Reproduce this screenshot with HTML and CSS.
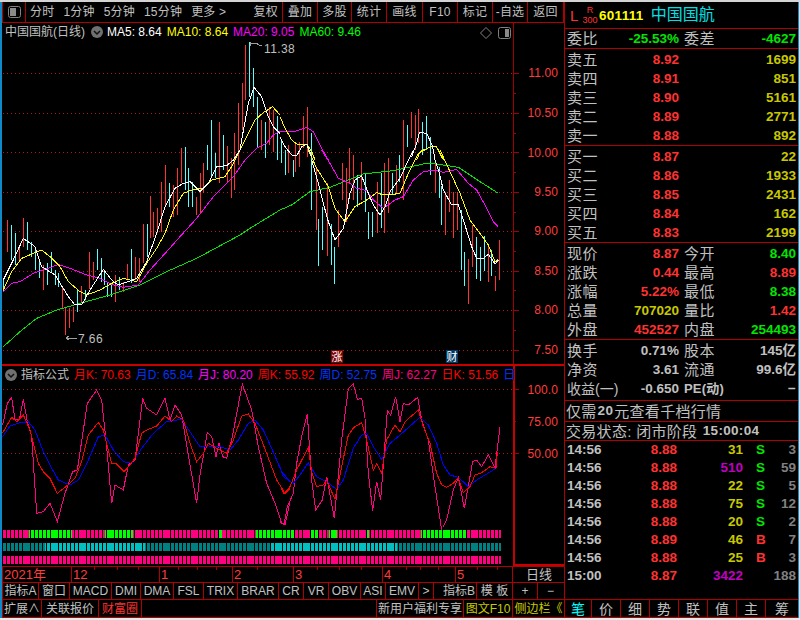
FILE: index.html
```html
<!DOCTYPE html>
<html lang="zh">
<head>
<meta charset="utf-8">
<title>中国国航</title>
<link rel="stylesheet" href="styles.css">
</head>
<body>
<div class="strip-top"></div>
<div class="app">
  <div class="edge-left"></div>
  <div class="left">
    <div class="toolbar">
      <div class="tb-icon">
        <svg class="icon" width="13" height="12" viewBox="0 0 13 12"><rect class="ic-box" x=".5" y=".5" width="12" height="11" rx="2"/><rect class="ic-fill" x="2" y="2" width="6" height="8"/></svg>
      </div>
      <div class="tb-periods"><span>分时</span><span>1分钟</span><span>5分钟</span><span>15分钟</span><span>更多 &gt;</span><span class="tb-push">复权</span></div>
      <div class="tb-btn">叠加</div><div class="tb-btn">多股</div><div class="tb-btn">统计</div><div class="tb-btn">画线</div><div class="tb-btn">F10</div><div class="tb-btn">标记</div><div class="tb-btn">-自选</div><div class="tb-btn">返回</div>
    </div>

    <div class="pane pane-main">
      <svg class="chart" width="562" height="341" viewBox="2 23 562 341">
        <path class="grid" d="M3 73H513M3 113H513M3 152.5H513M3 192H513M3 231H513M3 271H513M3 310H513M3 350H513"/>
        <path class="axis" d="M513.5 23V364M513 73h6M513 113h6M513 152.5h6M513 192h6M513 231h6M513 271h6M513 310h6M513 350h6M513 93h3M513 133h3M513 172h3M513 212h3M513 251h3M513 290h3M513 330h3"/>
        <g class="axis-labels">
          <text x="558" y="77">11.00</text><text x="558" y="117">10.50</text><text x="558" y="157">10.00</text><text x="558" y="196">9.50</text><text x="558" y="235">9.00</text><text x="558" y="275">8.50</text><text x="558" y="314">8.00</text><text x="558" y="354">7.50</text>
        </g>
        <path class="candle-red" d="M7.5 220V252M19.5 245V260M23.5 218V247M43.5 265V290M62.5 287V308M65.5 307V335M69.5 308V328M73.5 307V322M81.5 286V302M89.5 252V289M93.5 262V280M115.5 275V302M123.5 282V292M127.5 264V280M135.5 257V280M139.5 258V282M143.5 224V263M150.5 196V238M153.5 212V237M157.5 208V233M161.5 182V232M165.5 165V207M173.5 185V217M177.5 168V215M181.5 148V183M196.5 197V215M200.5 173V213M203.5 163V193M219.5 122V183M227.5 146V182M231.5 158V198M234.5 133V190M238.5 103V165M242.5 83V130M245.5 45V100M261.5 120V150M269.5 107V145M273.5 110V152M288.5 145V173M295.5 142V172M299.5 142V167M303.5 116V148M307.5 107V157M316.5 167V230M327.5 183V256M338.5 210V247M342.5 163V200M346.5 168V222M349.5 148V183M353.5 155V200M361.5 162V200M377.5 182V233M384.5 163V233M388.5 158V213M396.5 165V193M403.5 120V200M411.5 112V138M415.5 115V150M418.5 109V143M435.5 160V193M445.5 192V235M449.5 180V212M453.5 192V238M457.5 192V230M468.5 259V304M472.5 225V267M488.5 245V282M495.5 276V291M499.5 240V280"/>
        <path class="candle-cyan" d="M3.5 280V292M11.5 225V260M15.5 233V265M27.5 222V250M31.5 242V257M35.5 247V270M39.5 260V278M47.5 263V285M51.5 252V273M55.5 270V285M58.5 273V287M77.5 290V312M85.5 290V300M97.5 249V270M101.5 258V282M104.5 270V285M107.5 282V297M111.5 285V297M119.5 277V290M131.5 249V283M147.5 224V257M169.5 183V207M185.5 147V190M188.5 168V207M192.5 182V207M207.5 145V170M211.5 120V178M215.5 153V178M223.5 135V170M249.5 42V97M253.5 68V107M257.5 97V147M265.5 122V158M277.5 116V160M281.5 140V163M285.5 150V175M293.5 160V177M311.5 133V210M318.5 219V266M322.5 207V250M331.5 224V265M334.5 247V284M357.5 175V207M365.5 173V212M368.5 212V239M372.5 212V237M381.5 173V228M392.5 173V195M399.5 155V182M407.5 125V147M422.5 122V155M426.5 116V150M430.5 137V175M439.5 167V198M441.5 186V225M461.5 210V270M464.5 252V286M476.5 237V279M480.5 247V281M484.5 236V271M491.5 250V276"/>

        <polyline class="line l-green" transform="translate(0 150) scale(.33333)" points="10,590 60,545 110,505 170,480 240,460 330,435 420,405 500,365 590,325 720,255 750,235 840,180"/>
        <polyline class="line l-green" transform="translate(280 150) scale(.33333)" points="0,180 35,165 90,125 150,112 250,72 340,62 430,42 470,42 535,52 600,95 655,130"/>

        <polyline class="line l-mag" transform="translate(0 150) scale(.33333)" points="10,425 35,400 60,395 100,370 145,355 175,343 210,355 260,375 300,385 335,403 370,412 415,405 450,360 500,305 540,260 590,205 640,140 700,80 735,30 765,0"/>
        <polyline class="line l-mag" transform="scale(.33333)" points="765,450 770,445 800,430 820,405 840,395"/>
        <polyline class="line l-mag" transform="translate(280 0) scale(.33333)" points="0,395 50,393 80,382 100,395 125,445 145,480"/>
        <polyline class="line l-mag" transform="translate(280 150) scale(.33333)" points="125,0 150,40 175,85 210,100 230,115 260,122 280,150 310,175 345,150 370,140 400,90 430,65 465,60 490,67 530,58 565,100 590,120 615,165 640,215 655,230"/>

        <polyline class="line l-yel" transform="translate(0 150) scale(.33333)" points="10,420 35,365 65,325 100,310 125,300 150,320 180,350 205,395 240,425 260,435 300,420 335,400 370,385 410,395 440,340 470,295 495,250 520,180 550,130 580,118 610,115 635,90 675,80 695,50 720,0"/>
        <polyline class="line l-yel" transform="scale(.33333)" points="720,450 735,420 765,360 790,338 818,320 840,345"/>
        <polyline class="line l-yel" transform="translate(280 0) scale(.33333)" points="0,350 15,385 35,420 55,435 80,432 95,455 105,480"/>
        <polyline class="line l-yel" transform="translate(280 150) scale(.33333)" points="85,0 110,55 145,110 165,175 195,215 225,170 260,150 290,128 310,135 340,133 360,130 385,70 415,10 435,0"/>
        <polyline class="line l-yel" transform="translate(280 0) scale(.33333)" points="410,480 420,455 450,441 470,441 490,480"/>
        <polyline class="line l-yel" transform="translate(280 150) scale(.33333)" points="480,0 510,65 540,130 570,210 600,250 625,285 645,335 655,328"/>

        <polyline class="line l-white" transform="translate(0 150) scale(.33333)" points="10,390 35,340 70,265 105,290 125,350 165,375 205,440 225,465 245,465 270,420 310,358 335,390 355,405 385,395 410,385 440,335 470,250 495,170 525,115 550,100 570,95 600,125 625,100 650,50 680,47 700,30 720,0"/>
        <polyline class="line l-white" transform="scale(.33333)" points="720,450 725,420 745,310 762,262 785,290 805,350 820,380 840,400"/>
        <polyline class="line l-white" transform="translate(280 0) scale(.33333)" points="0,410 15,440 35,465 50,468 65,440 80,432 95,470"/>
        <polyline class="line l-white" transform="translate(280 150) scale(.33333)" points="95,30 115,100 130,160 145,215 165,270 190,235 210,130 225,90 245,78 265,130 280,165 300,195 315,170 330,125 360,85 385,30 400,0"/>
        <polyline class="line l-white" transform="translate(280 0) scale(.33333)" points="395,470 410,430 418,397 440,400 458,440 465,480"/>
        <polyline class="line l-white" transform="translate(280 150) scale(.33333)" points="465,30 478,70 490,120 515,165 535,165 550,210 575,290 590,325 610,325 625,313 645,342 655,330"/>

        <path class="marker" d="M250 42v4M250 43h6l3 2h3M66 338h11M66 338l3-2M66 338l3 2"/>
        <text class="note" x="264" y="53">11.38</text>
        <text class="note" x="78" y="343">7.66</text>

        <rect class="badge-red" x="331" y="350" width="12" height="13"/>
        <text class="badge-text" x="337" y="361">涨</text>
        <rect class="badge-blue" x="446" y="350" width="12" height="13"/>
        <text class="badge-text" x="452" y="361">财</text>
      </svg>
      <div class="legend">
        <span class="title">中国国航(日线)</span>
        <span class="round"><svg width="12" height="12" viewBox="0 0 12 12"><circle class="round-bg" cx="6" cy="6" r="6"/><path class="round-chev" d="M3 5l3 3 3-3"/></svg></span>
        <span class="c-white">MA5: 8.64</span><span class="c-yel">MA10: 8.64</span><span class="c-mag">MA20: 9.05</span><span class="c-green">MA60: 9.46</span>
      </div>
      <div class="corner-icons">
        <svg width="12" height="12" viewBox="0 0 12 12"><path class="ic-box" d="M6 .5L11.5 6 6 11.5.5 6z"/></svg>
        <svg width="13" height="12" viewBox="0 0 13 12"><rect class="ic-box" x=".5" y=".5" width="12" height="11" rx="2"/><rect class="ic-fill" x="7" y="2" width="4" height="8"/></svg>
      </div>
    </div>

    <div class="pane pane-sub">
      <svg class="chart" width="562" height="202" viewBox="2 364 562 202">
        <defs>
          <pattern id="comb" x="2" y="0" width="28" height="8" patternUnits="userSpaceOnUse"><path class="comb-gap" d="M0 0h1v8H0zM4 0h1v8H4zM8 0h1v8H8zM12 0h1v8h-1zM16 0h1v8h-1zM20 0h1v8h-1z"/></pattern>
        </defs>
        <path class="grid" d="M3 389H513M3 453H513"/>
        <path class="axis" d="M513 421h3M513 389h6M513 453h6"/>
        <g class="axis-labels">
          <text x="558" y="394">100.0</text><text x="558" y="426">75.00</text><text x="558" y="458">50.00</text>
        </g>
        <path class="frame" d="M2 365H564M514 364V566M514 565H564"/>

        <polyline class="line l-j" transform="translate(0 340) scale(.33333)" points="8,255 22,190 35,172 45,240 58,240 70,178 82,245 95,290 110,520 130,515 150,490 172,545 195,460 218,395 232,390 262,190 290,150 305,180 320,320 335,490 345,435 370,450 385,375 405,360 428,175 440,205 470,225 495,175 510,240 525,195 545,225 565,345 590,490 600,405 622,278 635,290 648,350 657,310 668,350 680,355 697,290 727,132 755,210 775,320 800,430 825,490 845,550 855,555 870,485"/>
        <polyline class="line l-j" transform="translate(280 340) scale(.33333)" points="0,545 12,553 22,500 40,460 50,370 65,290 82,222 95,420 107,510 127,480 140,410 163,535 185,300 205,145 220,132 232,178 245,175 255,235 265,400 278,512 290,425 302,480 322,212 332,225 347,170 360,245 370,190 385,195 413,172 425,240 445,300 465,440 485,570 500,540 520,450 535,412 553,505 578,365 590,360 605,380 625,345 645,385 650,340 660,262"/>
        <polyline class="line l-d" transform="translate(0 340) scale(.33333)" points="8,290 30,258 60,248 85,245 105,270 130,335 150,375 175,420 210,435 235,420 265,360 295,290 315,285 340,330 370,365 395,370 425,325 460,280 500,245 545,238 570,275 600,320 625,318 660,320 690,330 715,300 745,250 765,240 790,270 815,325 845,395 870,425"/>
        <polyline class="line l-d" transform="translate(280 340) scale(.33333)" points="0,382 10,410 40,430 60,405 85,368 110,410 140,425 170,448 190,420 220,325 245,285 260,280 280,320 305,358 330,310 360,285 420,232 445,255 470,310 490,375 510,405 535,412 565,440 590,420 640,390 655,378"/>
        <polyline class="line l-k" transform="translate(0 340) scale(.33333)" points="8,278 35,232 50,245 70,225 90,270 115,370 130,395 150,415 172,460 200,438 225,415 245,365 265,285 295,247 310,270 335,370 350,372 372,395 390,375 405,355 425,280 440,270 470,258 495,228 515,245 530,228 550,240 570,310 590,365 610,340 625,310 650,325 680,340 700,300 725,228 745,222 765,250 800,340 830,420 855,460 870,445"/>
        <polyline class="line l-k" transform="translate(280 340) scale(.33333)" points="0,435 12,462 30,440 50,390 85,322 95,395 110,440 130,435 140,420 165,478 185,380 205,285 222,262 245,248 260,300 280,390 290,370 305,400 320,300 345,255 360,275 375,245 415,210 430,260 450,310 470,400 485,435 500,442 520,430 535,413 550,458 570,440 585,405 605,398 630,380 648,385 652,335"/>

        <!-- signal rows: coloured runs, then a comb that cuts them into bars -->
        <path class="sig-pink" d="M3 534H29M72 534H105M133 534H218M222 534H256M294 534H310M319 534H329M337 534H367M369 534H421M467 534H501M3 559.5H501"/>
        <path class="sig-green" d="M29 534H72M105 534H133M218 534H222M256 534H294M310 534H319M329 534H337M367 534H369M421 534H467"/>
        <path class="sig-teal" d="M3 547H45M145 547H270M397 547H501"/>
        <path class="sig-cyan" d="M45 547H145M270 547H397"/>
        <rect class="comb" x="3" y="526" width="499" height="40"/>
      </svg>
      <div class="legend legend-sub">
        <span class="round"><svg width="12" height="12" viewBox="0 0 12 12"><circle class="round-bg" cx="6" cy="6" r="6"/><path class="round-chev" d="M3 5l3 3 3-3"/></svg></span>
        <span class="title sub-title">指标公式</span>
        <span class="c-red">月K: 70.63</span><span class="c-blue">月D: 65.84</span><span class="c-mag">月J: 80.20</span><span class="c-red">周K: 55.92</span><span class="c-blue">周D: 52.75</span><span class="c-pink">周J: 62.27</span><span class="c-red">日K: 51.56</span><span class="c-blue">日</span>
      </div>
    </div>

    <div class="time-row">
      <div>2021年</div><div>12</div><div>1</div><div>2</div><div>3</div><div>4</div><div>5</div><div class="time-mode">日线</div>
      <svg class="time-ticks" width="512" height="4" viewBox="0 0 512 4"><path class="axis" d="M92 0v3M115 0v3M136 0v3M176 0v3M195 0v3M214 0v3M255 0v3M315 0v3M337 0v3M359 0v3M404 0v3M418 0v3M436 0v3M475 0v3M495 0v3"/></svg>
    </div>

    <div class="tab-row">
      <div>指标A</div><div>窗口</div><div>MACD</div><div>DMI</div><div>DMA</div><div>FSL</div><div>TRIX</div><div>BRAR</div><div>CR</div><div>VR</div><div>OBV</div><div>ASI</div><div>EMV</div><div>&gt;</div><div class="tab-b">指标B</div><div>模 板</div><div>+</div><div>−</div>
    </div>

    <div class="bottom-row">
      <div>扩展∧</div><div>关联报价</div><div class="c-hot">财富圈</div><div class="bottom-gap"></div><div>新用户福利专享</div><div class="c-dimyel">图文F10</div><div class="c-dimyel">侧边栏《</div>
    </div>
  </div>

  <div class="right">
    <div class="r-head">
      <span class="r-l">L</span>
      <span class="r-stack"><span>R</span><span>300</span></span>
      <span class="r-code">601111</span>
      <span class="r-name">中国国航</span>
    </div>
    <div class="r-sec r-one">
      <div class="qrow"><span class="lab">委比</span><span class="num c-g">-25.53%</span><span class="lab lab2">委差</span><span class="num col5 c-g">-4627</span></div>
    </div>
    <div class="r-sec r-five">
      <div class="qrow"><span class="lab">卖五</span><span class="num c-r">8.92</span><span class="num col5 c-y">1699</span></div>
      <div class="qrow"><span class="lab">卖四</span><span class="num c-r">8.91</span><span class="num col5 c-y">851</span></div>
      <div class="qrow"><span class="lab">卖三</span><span class="num c-r">8.90</span><span class="num col5 c-y">5161</span></div>
      <div class="qrow"><span class="lab">卖二</span><span class="num c-r">8.89</span><span class="num col5 c-y">2771</span></div>
      <div class="qrow"><span class="lab">卖一</span><span class="num c-r">8.88</span><span class="num col5 c-y">892</span></div>
    </div>
    <div class="r-sec r-five">
      <div class="qrow"><span class="lab">买一</span><span class="num c-r">8.87</span><span class="num col5 c-y">22</span></div>
      <div class="qrow"><span class="lab">买二</span><span class="num c-r">8.86</span><span class="num col5 c-y">1933</span></div>
      <div class="qrow"><span class="lab">买三</span><span class="num c-r">8.85</span><span class="num col5 c-y">2431</span></div>
      <div class="qrow"><span class="lab">买四</span><span class="num c-r">8.84</span><span class="num col5 c-y">162</span></div>
      <div class="qrow"><span class="lab">买五</span><span class="num c-r">8.83</span><span class="num col5 c-y">2199</span></div>
    </div>
    <div class="r-sec r-five">
      <div class="qrow"><span class="lab">现价</span><span class="num c-r">8.87</span><span class="lab lab2">今开</span><span class="num col5 c-g">8.40</span></div>
      <div class="qrow"><span class="lab">涨跌</span><span class="num c-r">0.44</span><span class="lab lab2">最高</span><span class="num col5 c-r">8.89</span></div>
      <div class="qrow"><span class="lab">涨幅</span><span class="num c-r">5.22%</span><span class="lab lab2">最低</span><span class="num col5 c-g">8.38</span></div>
      <div class="qrow"><span class="lab">总量</span><span class="num c-y">707020</span><span class="lab lab2">量比</span><span class="num col5 c-r">1.42</span></div>
      <div class="qrow"><span class="lab">外盘</span><span class="num c-r">452527</span><span class="lab lab2">内盘</span><span class="num col5 c-g">254493</span></div>
    </div>
    <div class="r-sec r-three">
      <div class="qrow"><span class="lab">换手</span><span class="num c-w">0.71%</span><span class="lab lab2">股本</span><span class="num col5 c-w">145亿</span></div>
      <div class="qrow"><span class="lab">净资</span><span class="num c-w">3.61</span><span class="lab lab2">流通</span><span class="num col5 c-w">99.6亿</span></div>
      <div class="qrow"><span class="lab lab-wide">收益(一)</span><span class="num c-w">-0.650</span><span class="lab lab2 lab-pe">PE(动)</span><span class="num col5 c-w">−</span></div>
    </div>
    <div class="r-sec r-line r-line-a">仅需<b>20</b>元查看千档行情</div>
    <div class="r-sec r-line r-line-b">交易状态: 闭市阶段 <b>15:00:04</b></div>
    <div class="r-trades">
      <div class="trow"><span class="t-time">14:56</span><span class="c-r">8.88</span><span class="c-y">31</span><span class="t-bs c-g">S</span><span class="t-n">3</span></div>
      <div class="trow"><span class="t-time">14:56</span><span class="c-r">8.88</span><span class="c-p">510</span><span class="t-bs c-g">S</span><span class="t-n">59</span></div>
      <div class="trow"><span class="t-time">14:56</span><span class="c-r">8.88</span><span class="c-y">22</span><span class="t-bs c-g">S</span><span class="t-n">5</span></div>
      <div class="trow"><span class="t-time">14:56</span><span class="c-r">8.88</span><span class="c-y">75</span><span class="t-bs c-g">S</span><span class="t-n">12</span></div>
      <div class="trow"><span class="t-time">14:56</span><span class="c-r">8.88</span><span class="c-y">20</span><span class="t-bs c-g">S</span><span class="t-n">2</span></div>
      <div class="trow"><span class="t-time">14:56</span><span class="c-r">8.89</span><span class="c-y">46</span><span class="t-bs c-r">B</span><span class="t-n">7</span></div>
      <div class="trow"><span class="t-time">14:56</span><span class="c-r">8.88</span><span class="c-y">25</span><span class="t-bs c-r">B</span><span class="t-n">3</span></div>
      <div class="trow"><span class="t-time">15:00</span><span class="c-r">8.87</span><span class="c-p">3422</span><span class="t-bs"></span><span class="t-n">188</span></div>
    </div>
    <div class="r-tabs">
      <div class="r-tab-on">笔</div><div>价</div><div>细</div><div>势</div><div>联</div><div>值</div><div>主</div><div>筹</div>
    </div>
  </div>
  <div class="edge-right"></div>
</div>
<div class="strip-bottom"></div>
</body>
</html>
```

FILE: styles.css
```css
* { box-sizing: border-box; }
html, body { margin: 0; padding: 0; }
body {
  width: 800px;
  height: 620px;
  overflow: hidden;
  background: #000;
  color: #c0c0c0;
  font: 12px/1 "Liberation Sans", "Noto Sans CJK SC", sans-serif;
}
svg { display: block; }
.strip-top { height: 2px; background: #d4d4d4; }
.strip-bottom { height: 2px; background: #e8e8e8; }
.app { display: flex; height: 616px; }
.edge-left { width: 2px; background: #1089c9; }
.edge-right { width: 2px; background: linear-gradient(90deg, #1089c9 50%, #dcdcdc 50%); }
.left { width: 563px; display: flex; flex-direction: column; border-right: 1px solid #b00000; }
.right { width: 233px; display: flex; flex-direction: column; }

/* top toolbar */
.toolbar {
  height: 21px;
  display: grid;
  grid-template-columns: 24px 257px 35px 34px 35px 36px 35px 35px 35px 36px;
  border-bottom: 1px solid #b00000;
  letter-spacing: .2px;
}
.toolbar > div { display: flex; align-items: center; border-right: 1px solid #b00000; }
.tb-icon { border-left: 1px solid #b00000; justify-content: center; }
.tb-periods { gap: 9px; padding: 0 4px 0 4px; }
.tb-push { margin-left: auto; }
.tb-btn { justify-content: center; }
.ic-box { fill: none; stroke: #808080; }
.ic-fill { fill: #8a8a8a; }

/* chart panes */
.pane { position: relative; }
.pane-main { height: 341px; }
.pane-sub { height: 202px; }
.grid { fill: none; stroke: #a02020; stroke-dasharray: 1 3; shape-rendering: crispEdges; }
.axis { fill: none; stroke: #a00000; shape-rendering: crispEdges; }
.frame { fill: none; stroke: #c80000; stroke-width: 2; shape-rendering: crispEdges; }
.axis-labels text { fill: #ff3c3c; font-size: 12px; text-anchor: end; letter-spacing: .1px; }
.candle-red, .candle-cyan { fill: none; shape-rendering: crispEdges; }
.candle-red { stroke: #ff3232; }
.candle-cyan { stroke: #54ffff; }
.line { fill: none; stroke-width: 1; vector-effect: non-scaling-stroke; shape-rendering: crispEdges; }
.l-green { stroke: #00e600; }
.l-mag { stroke: #ff00ff; }
.l-yel { stroke: #ffff00; }
.l-white { stroke: #ffffff; }
.l-j { stroke: #ff0080; }
.l-k { stroke: #ff0000; }
.l-d { stroke: #0000ff; }
.marker { fill: none; stroke: #a0a0a0; shape-rendering: crispEdges; }
.note { fill: #c0c0c0; font-size: 12px; letter-spacing: .4px; }
.badge-red { fill: #800000; }
.badge-blue { fill: #003a66; }
.badge-text { fill: #fff; font-size: 11px; text-anchor: middle; }
.sig-pink, .sig-green, .sig-teal, .sig-cyan { fill: none; stroke-width: 8; shape-rendering: crispEdges; }
.sig-pink { stroke: #ff0080; }
.sig-green { stroke: #00ff00; }
.sig-teal { stroke: #008080; }
.sig-cyan { stroke: #00c0c0; }
.comb { fill: url(#comb); shape-rendering: crispEdges; }
.comb-gap { fill: #000; shape-rendering: crispEdges; }

.legend {
  position: absolute;
  top: 0;
  left: 3px;
  width: 510px;
  height: 18px;
  display: flex;
  align-items: center;
  overflow: hidden;
  white-space: nowrap;
  column-gap: 5px;
}
.legend-sub { top: 2px; left: 2px; width: 511px; }
.title { color: #c0c0c0; }
.round { flex: none; margin-left: 1px; margin-right: -1px; }
.round-bg { fill: #707070; }
.round-chev { fill: none; stroke: #111; stroke-width: 1.5; }
.corner-icons { position: absolute; top: 4px; left: 478px; display: flex; gap: 6px; }
.c-white { color: #fff; }
.c-yel { color: #ffff00; }
.c-mag { color: #ff00ff; }
.c-green { color: #00ff00; }
.c-red { color: #ff0000; }
.c-blue { color: #0033ff; }
.c-pink { color: #ff0080; }
.c-hot { color: #ff3232; }
.c-dimyel { color: #c8c800; }

/* bottom strips */
.time-row {
  position: relative;
  height: 16px;
  display: grid;
  grid-template-columns: 70px 88px 73px 61px 89px 73px 57px 1fr;
  border-top: 1px solid #b00000;
  color: #ff3c3c;
  font-size: 13px;
}
.time-row > div { display: flex; align-items: center; border-right: 1px solid #b00000; padding-left: 1px; }
.time-row > div:first-child { border-left: 1px solid #b00000; }
.time-row > .time-mode { color: #c0c0c0; justify-content: center; border-right: 0; }
.time-ticks { position: absolute; top: 0; left: 0; }
.tab-row {
  height: 17px;
  display: grid;
  grid-template-columns: 37px 31px 42px 29px 33px 30px 34px 41px 25px 25px 32px 25px 33px 15px 43px 36px 25px 25px;
  border-top: 1px solid #b00000;
}
.tab-row > div { display: flex; align-items: center; justify-content: center; border-right: 1px solid #b00000; white-space: nowrap; }
.tab-row > div:first-child { border-left: 1px solid #b00000; }
.tab-row > div:last-child { border-right: 0; }
.tab-row > .tab-b { padding-left: 8px; }
.bottom-row {
  height: 19px;
  display: grid;
  grid-template-columns: 40px 57px 43px 235px 87px 49px 1fr;
  border-top: 1px solid #b00000;
  border-bottom: 1px solid #b00000;
}
.bottom-row > div { display: flex; align-items: center; justify-content: center; border-right: 1px solid #b00000; white-space: nowrap; }
.bottom-row > div:first-child { border-left: 1px solid #b00000; }
.bottom-row > div:last-child { border-right: 0; }

/* right quote panel */
.r-head { height: 27px; display: flex; align-items: center; border-bottom: 1px solid #b00000; padding-left: 5px; }
.r-l { color: #ff3232; font-size: 15px; width: 13px; }
.r-stack { display: flex; flex-direction: column; align-items: center; width: 14px; color: #ff3232; font-size: 9px; line-height: 10px; margin-right: 2px; }
.r-code { color: #ffff00; font: bold 13.5px "Liberation Sans", sans-serif; letter-spacing: .3px; margin-right: 7px; }
.r-name { color: #00e0e6; font-size: 16px; }
.r-sec { border-bottom: 1px solid #b00000; }
.r-one { height: 20px; }
.r-five { height: 97px; padding-top: 1px; }
.r-three { height: 61px; padding-top: 1px; }
.qrow {
  display: grid;
  grid-template-columns: 40px 72px 5px 40px 72px;
  height: 19px;
  padding-left: 2px;
  align-items: center;
}
.lab { grid-column: 1; font-size: 15px; white-space: nowrap; letter-spacing: .5px; }
.lab2 { grid-column: 4; }
.lab-wide { letter-spacing: 0; font-size: 14px; }
.lab-pe { font-size: 13px; font-weight: bold; letter-spacing: .2px; }
.num { grid-column: 2; text-align: right; font-size: 13.5px; font-weight: bold; white-space: nowrap; }
.col5 { grid-column: 5; }
.c-r { color: #ff3232; }
.c-g { color: #00e600; }
.c-y { color: #c8c800; }
.c-p { color: #c000c0; }
.c-w { color: #c0c0c0; }
.r-line { font-size: 15px; display: flex; align-items: center; padding-left: 1px; white-space: pre; letter-spacing: .3px; }
.r-line b { font-size: 13.5px; margin: 0 1px; }
.r-line-a { height: 21px; }
.r-line-b { height: 19px; }
.r-trades { flex: 1; }
.trow {
  display: grid;
  grid-template-columns: 40px 70px 66px 26px 27px;
  height: 18px;
  padding-left: 2px;
  align-items: center;
  font-size: 13.5px;
  font-weight: bold;
  text-align: right;
}
.t-time { text-align: left; color: #c0c0c0; }
.t-bs { text-align: left; padding-left: 13px; }
.t-n { color: #808080; }
.r-tabs {
  height: 19px;
  display: grid;
  grid-template-columns: 27px repeat(6, 29px) 32px;
  border-top: 1px solid #b00000;
  border-bottom: 1px solid #b00000;
  font-size: 14px;
}
.r-tabs > div { display: flex; align-items: center; justify-content: center; border-right: 1px solid #b00000; }
.r-tabs > div:last-child { border-right: 0; }
.r-tabs > .r-tab-on { color: #00ffff; }
```
